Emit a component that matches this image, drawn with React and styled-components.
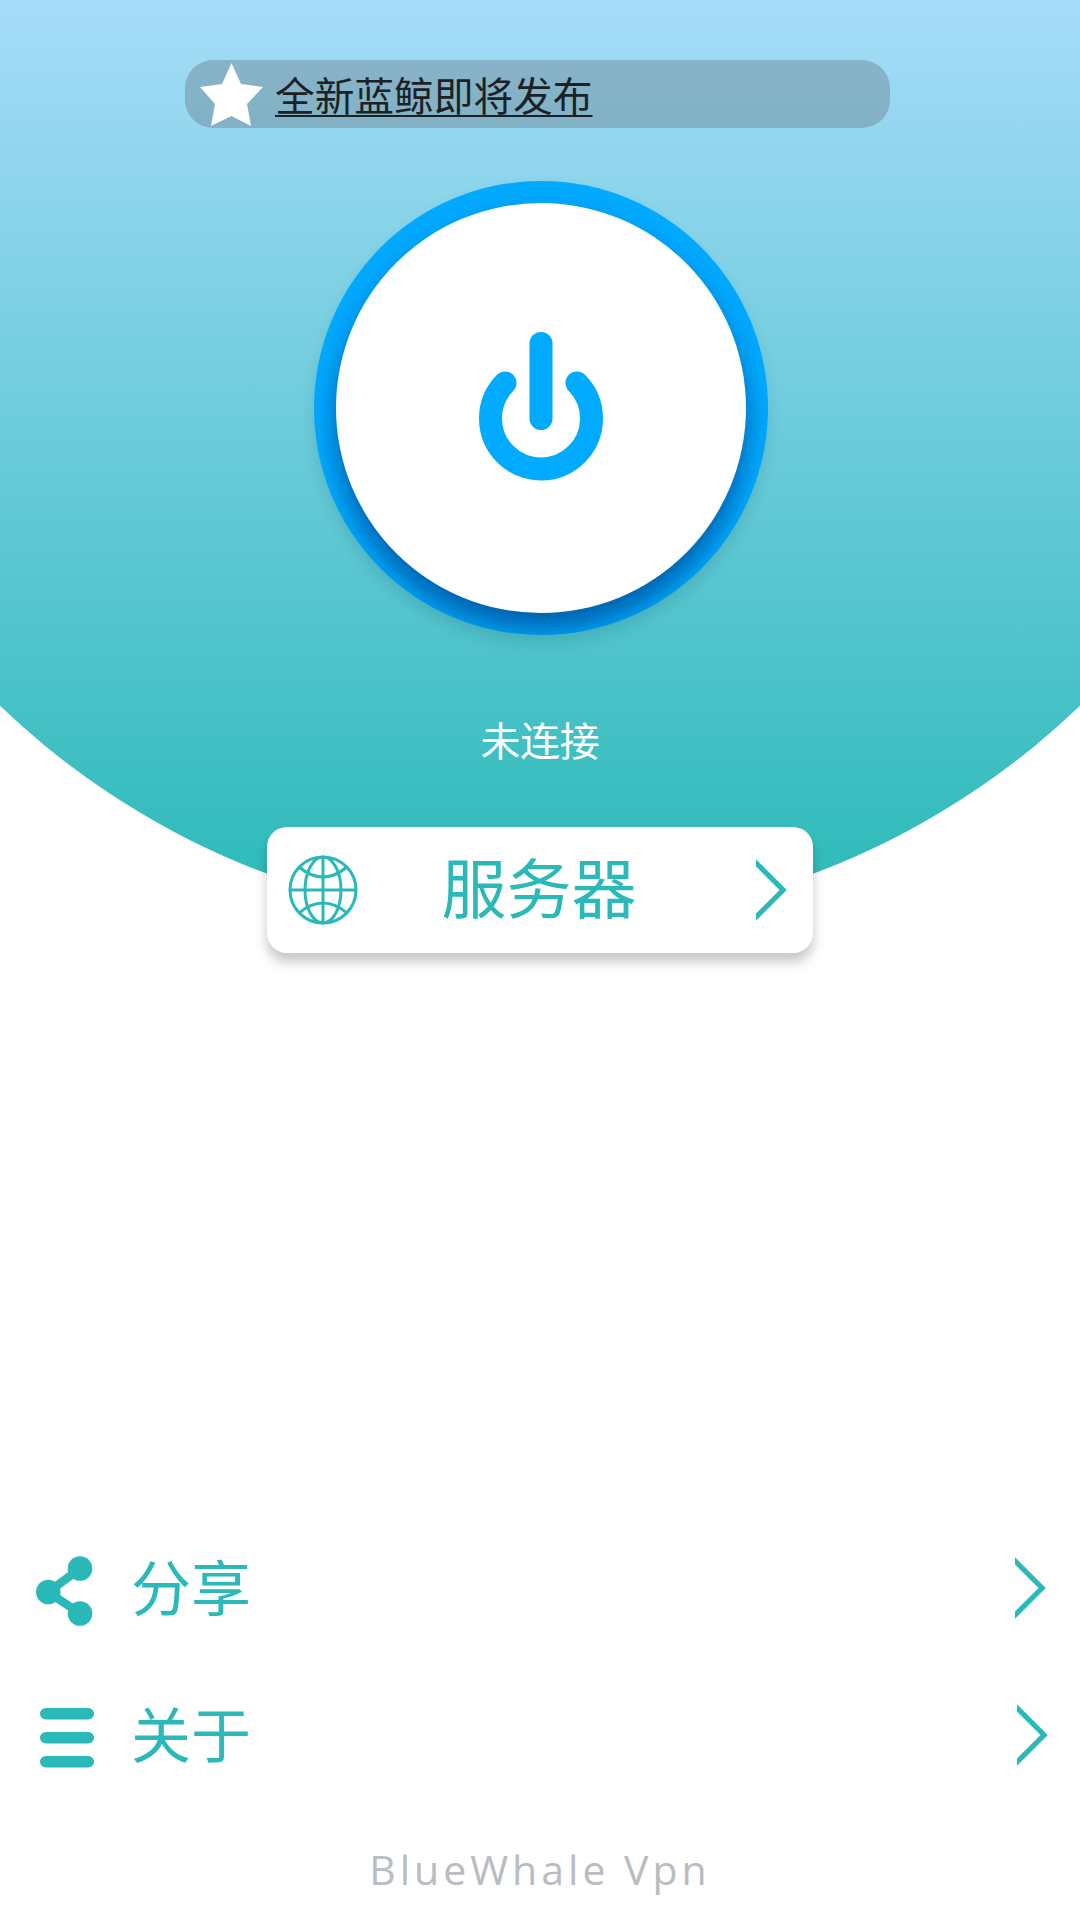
import React from "react";
import styled, { createGlobalStyle } from "styled-components";

const TEAL = "#2ab8b8";
const CJK = `"Noto Sans CJK SC", "Noto Sans", sans-serif`;

const GlobalStyle = createGlobalStyle`
  html, body {
    margin: 0;
    padding: 0;
    background: #fff;
  }
  * {
    box-sizing: border-box;
  }
`;

const St = {
  Page: styled.div`
    display: flex;
    flex-direction: column;
    width: 1080px;
    height: 1920px;
    background: #fff;
    overflow: hidden;
    font-family: ${CJK};
  `,
  Hero: styled.section`
    position: relative;
    isolation: isolate;
    display: flex;
    flex-direction: column;
    padding-top: 60px;
    &::before {
      content: "";
      position: absolute;
      z-index: -1;
      left: 0;
      top: 0;
      width: 1080px;
      height: 923px;
      background: linear-gradient(180deg, #a6dcf8 0, #33bcbc 850px);
      clip-path: circle(780px at 540px 143px);
    }
  `,
  Banner: styled.div`
    display: flex;
    align-items: center;
    width: 705px;
    height: 68px;
    margin-left: 185px;
    padding-left: 15px;
    gap: 12px;
    border-radius: 28px;
    background: rgba(85, 88, 100, 0.3);
  `,
  BannerLink: styled.a`
    font-size: 39.7px;
    line-height: 60px;
    font-weight: 400;
    color: #1b2226;
    text-decoration: underline;
    text-underline-offset: 4px;
    text-decoration-thickness: 2px;
  `,
  PowerRing: styled.div`
    display: flex;
    align-items: center;
    justify-content: center;
    width: 454px;
    height: 454px;
    margin: 53px 0 0 314px;
    border-radius: 50%;
    background: #00aaff;
    overflow: hidden;
    box-shadow: 0 8px 14px rgba(0, 60, 90, 0.14);
  `,
  PowerButton: styled.button`
    display: flex;
    align-items: center;
    justify-content: center;
    width: 410px;
    height: 410px;
    padding: 0 0 4px;
    border: none;
    border-radius: 50%;
    background: #fff;
    box-shadow: 0 16px 26px rgba(0, 55, 125, 0.65);
  `,
  Status: styled.div`
    margin-top: 74px;
    text-align: center;
    font-size: 40px;
    line-height: 60px;
    letter-spacing: -0.3px;
    color: #fff;
  `,
  ServerCard: styled.button`
    display: flex;
    align-items: center;
    align-self: center;
    width: 546px;
    height: 126px;
    margin-top: 58px;
    padding: 0 26px 0 21px;
    border: none;
    border-radius: 20px;
    background: #fff;
    box-shadow: 0 9px 12px rgba(0, 0, 0, 0.22);
    font-family: inherit;
  `,
  ServerName: styled.span`
    flex: 1;
    padding-right: 36px;
    margin-bottom: 10px;
    text-align: center;
    font-size: 65px;
    line-height: 80px;
    color: ${TEAL};
  `,
  Spacer: styled.div`
    flex: 1;
  `,
  Row: styled.div`
    display: flex;
    align-items: center;
    height: 147px;
    padding-left: ${({ $iconLeft }) => $iconLeft}px;
    padding-right: ${({ $right }) => $right}px;
  `,
  RowIcon: styled.div`
    display: flex;
    width: ${({ $w }) => $w}px;
    margin: 2px ${({ $gap }) => $gap}px 0 0;
  `,
  RowLabel: styled.span`
    flex: 1;
    margin-bottom: 10px;
    font-size: 60px;
    line-height: 70px;
    color: ${TEAL};
  `,
  RowArrow: styled.div`
    display: flex;
    margin-bottom: 3px;
  `,
  Footer: styled.div`
    height: 110px;
    padding-top: 31px;
    text-align: center;
    font-family: "Open Sans", "Noto Sans", sans-serif;
    font-size: 41px;
    line-height: 56px;
    letter-spacing: 4px;
    color: #b9bcc1;
  `,
};

const StarIcon = () => (
  <svg width="63" height="63" viewBox="0 0 63 63">
    <polygon points="31.5,0 41,21 63,24 47,41 51,63 31.5,53 11,63 15,41 0,24 22,21" fill="#fff" />
  </svg>
);

const PowerIcon = () => (
  <svg width="124" height="149" viewBox="0 0 124 149">
    <g fill="none" stroke="#00aaff" strokeWidth="23" strokeLinecap="round">
      <line x1="62" y1="11.5" x2="62" y2="86.5" />
      <path d="M26 51 A50.5 50.5 0 1 0 98 51" />
    </g>
  </svg>
);

const GlobeIcon = () => (
  <svg width="70" height="70" viewBox="0 0 70 70">
    <g fill="none" stroke={TEAL} strokeWidth="3">
      <circle cx="35" cy="35" r="33" />
      <ellipse cx="35" cy="35" rx="18" ry="33" />
      <line x1="35" y1="2" x2="35" y2="68" />
      <line x1="2" y1="35" x2="68" y2="35" />
      <path d="M11 12 Q35 32 59 12" />
      <path d="M11 58 Q35 38 59 58" />
    </g>
  </svg>
);

const Chevron = () => (
  <svg width="31" height="62" viewBox="0 0 31 62">
    <polyline points="-3,0.9 27.1,31 -3,61.1" fill="none" stroke={TEAL} strokeWidth="5.2" />
  </svg>
);

const ShareIcon = () => (
  <svg width="58" height="70" viewBox="0 0 58 70">
    <g fill={TEAL}>
      <circle cx="44" cy="12.5" r="12.3" />
      <circle cx="12.3" cy="36" r="12.3" />
      <circle cx="44" cy="57.5" r="12.3" />
    </g>
    <polyline points="44,12.5 12.3,36 44,57.5" fill="none" stroke={TEAL} strokeWidth="8.5" />
  </svg>
);

const MenuIcon = () => (
  <svg width="54" height="60" viewBox="0 0 54 60">
    <g fill={TEAL}>
      <rect x="0" y="0" width="54" height="11.5" rx="5.75" />
      <rect x="0" y="24" width="54" height="11.5" rx="5.75" />
      <rect x="0" y="48" width="54" height="11.5" rx="5.75" />
    </g>
  </svg>
);

export default function App() {
  return (
    <St.Page>
      <GlobalStyle />
      <St.Hero>
        <St.Banner>
          <StarIcon />
          <St.BannerLink>全新蓝鲸即将发布</St.BannerLink>
        </St.Banner>
        <St.PowerRing>
          <St.PowerButton>
            <PowerIcon />
          </St.PowerButton>
        </St.PowerRing>
        <St.Status>未连接</St.Status>
        <St.ServerCard>
          <GlobeIcon />
          <St.ServerName>服务器</St.ServerName>
          <Chevron />
        </St.ServerCard>
      </St.Hero>
      <St.Spacer />
      <St.Row $iconLeft={36} $right={34}>
        <St.RowIcon $w={58} $gap={37}>
          <ShareIcon />
        </St.RowIcon>
        <St.RowLabel>分享</St.RowLabel>
        <St.RowArrow>
          <Chevron />
        </St.RowArrow>
      </St.Row>
      <St.Row $iconLeft={40} $right={32}>
        <St.RowIcon $w={54} $gap={37}>
          <MenuIcon />
        </St.RowIcon>
        <St.RowLabel>关于</St.RowLabel>
        <St.RowArrow>
          <Chevron />
        </St.RowArrow>
      </St.Row>
      <St.Footer>BlueWhale Vpn</St.Footer>
    </St.Page>
  );
}
